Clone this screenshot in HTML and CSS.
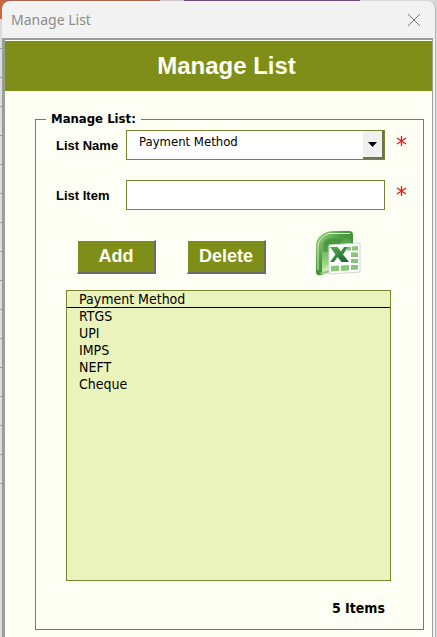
FILE: index.html
```html
<!DOCTYPE html>
<html lang="en">
<head>
    <meta charset="UTF-8">
    <meta name="viewport" content="width=device-width, initial-scale=1.0">
    <title>Manage List</title>
    <link rel="stylesheet" href="styles.css">
</head>
<body>

    <div class="window">
        <div class="titlebar">
            <span>Manage List</span>
            <button type="button" class="close" aria-label="Close">
                <svg width="14" height="14" viewBox="0 0 14 14">
                    <path d="M1 1L13 13M13 1L1 13" stroke="#777" stroke-width="1" fill="none"/>
                </svg>
            </button>
        </div>

        <form class="form">
            <h1>Manage List</h1>

            <fieldset>
                <legend>Manage List:</legend>

                <div class="field">
                    <label for="list-name">List Name</label>
                    <div class="combo">
                        <select id="list-name">
                            <option>Payment Method</option>
                        </select>
                        <span class="arrow">
                            <svg width="9" height="5" viewBox="0 0 9 5"><path d="M0 0H9L4.5 5Z" fill="#000"/></svg>
                        </span>
                    </div>
                    <svg class="required" width="11" height="12" viewBox="0 0 11 12">
                        <path d="M5.5 1V11M1 3L10 9M10 3L1 9" stroke="#e01b1b" stroke-width="1.3" fill="none"/>
                    </svg>
                </div>

                <div class="field">
                    <label for="list-item">List Item</label>
                    <input type="text" id="list-item">
                    <svg class="required" width="11" height="12" viewBox="0 0 11 12">
                        <path d="M5.5 1V11M1 3L10 9M10 3L1 9" stroke="#e01b1b" stroke-width="1.3" fill="none"/>
                    </svg>
                </div>

                <div class="actions">
                    <button type="button" class="btn">Add</button>
                    <button type="button" class="btn">Delete</button>
                    <button type="button" class="excel" aria-label="Export to Excel">
                        <svg width="46" height="47" viewBox="0 0 46 47">
                            <defs>
                                <linearGradient id="frame" x1="0" y1="0" x2="1" y2="1">
                                    <stop offset="0" stop-color="#a9dc8c"/>
                                    <stop offset="0.4" stop-color="#4c9a3c"/>
                                    <stop offset="1" stop-color="#2c7a2a"/>
                                </linearGradient>
                                <linearGradient id="inside" x1="0" y1="0" x2="0" y2="1">
                                    <stop offset="0" stop-color="#4f9d45"/>
                                    <stop offset="0.6" stop-color="#8cc878"/>
                                    <stop offset="1" stop-color="#c2e8a4"/>
                                </linearGradient>
                                <linearGradient id="cross" x1="0" y1="0" x2="1" y2="1">
                                    <stop offset="0" stop-color="#5cac50"/>
                                    <stop offset="1" stop-color="#14602c"/>
                                </linearGradient>
                            </defs>
                            <path d="M1 15Q1 6 12 2Q15 1 20 1H34Q38 1 38 5V35L6 45Q1 46 1 42Z" fill="url(#frame)"/>
                            <path d="M3 40V16Q4 7 14 3.500H35" stroke="#d3f0bd" stroke-width="1" fill="none"/>
                            <path d="M7 40V17Q7 9 16 8H36V32L8 42Z" fill="url(#inside)"/>
                            <path d="M8 22Q20 23 28 9H17Q8 10 8 18Z" fill="#3e8d38" opacity="0.6"/>
                            <path d="M5 44Q12 34 20 32V44Z" fill="#d7f3bd" opacity="0.6"/>
                            <path d="M14 15L45 13V42L14 44Z" fill="#fff" stroke="#cfdcc9" stroke-width="1"/>
                            <path d="M32 17L36 16.800V20.500H32ZM37 16.500L43 16V20.500H37ZM36 22.500H43V27H36ZM36 29H43V33H36ZM16 36L24 35.500V41L16 41.500ZM26 35.500L34 35V40.500L26 41ZM36 35H43V39.500L36 40Z" fill="#8ac57b"/>
                            <path d="M15 17H22.500L26 21.500L29 17H33L28 24.500L34 32H26.500L22.500 27L19 32H15L20.500 24.500Z" fill="url(#cross)"/>
                        </svg>
                    </button>
                </div>

                <div class="list">
                    <label for="items">Payment Method</label>
                    <select id="items" size="5">
                        <option>RTGS</option>
                        <option>UPI</option>
                        <option>IMPS</option>
                        <option>NEFT</option>
                        <option>Cheque</option>
                    </select>
                </div>

                <p class="count">5 Items</p>
            </fieldset>
        </form>
    </div>

</body>
</html>
```
FILE: styles.css
```css
* {
    box-sizing: border-box;
}

body {
    margin: 0;
    padding: 1px 1px 0 2px;
    min-height: 100vh;
    display: flex;
    font-family: "DejaVu Sans Condensed", "Noto Sans", sans-serif;
    background:
        linear-gradient(#c9683f, #c9683f) 0 0 / 4px 19px no-repeat,
        linear-gradient(to right, #a9654f 160px, #cfc6cc 160px, #cfc6cc 184px, #6f4a80 184px, #6f4a80 360px, #d8d8dc 360px) 0 0 / 100% 4px no-repeat,
        repeating-linear-gradient(#dcdce0 0, #dcdce0 28px, #9a9aa6 28px, #9a9aa6 29px) 0 20px / 4px 464px no-repeat,
        #dcdce0;
}

.window {
    flex: 1;
    display: flex;
    flex-direction: column;
    background-color: #f2f2f2;
    border-right: 1px solid #b4b4b4;
    border-radius: 8px 8px 0 0;
}

.titlebar {
    display: flex;
    justify-content: space-between;
    align-items: center;
    height: 37px;
    padding: 0 6px 0 9px;
    font-family: "Noto Sans", sans-serif;
    font-size: 14px;
    color: #8a8a8a;
}

.close {
    display: flex;
    padding: 8px;
    border: none;
    background: none;
    cursor: pointer;
}

.form {
    flex: 1;
    margin-right: 2px;
    border: 2px solid #9a9f96;
    border-width: 2px 1px 0 3px;
    background-color: #fdfff4;
    padding-top: 1px;
}

h1 {
    margin: 0;
    height: 50px;
    line-height: 50px;
    background-color: #7f8e18;
    color: #fdfff0;
    font-family: "Liberation Sans", Arial, sans-serif;
    font-size: 24px;
    text-align: center;
    padding-left: 16px;
}

fieldset {
    min-width: 0;
    margin: 20px 8px 7px 30px;
    padding: 3px 32px 12px 30px;
    border: 1px solid #7a8430;
}

legend {
    margin-left: -20px;
    padding: 0 5px;
    font-size: 13px;
    line-height: 16px;
    font-weight: bold;
}

.field {
    display: grid;
    grid-template-columns: 59px 1fr 11px;
    column-gap: 11px;
    height: 30px;
    margin: 0 -16px 20px -10px;
}

.field label {
    align-self: center;
    font-family: "Liberation Sans", Arial, sans-serif;
    font-size: 13px;
    font-weight: bold;
    white-space: nowrap;
}

.field input,
.field select {
    width: 100%;
    height: 30px;
    padding: 0 12px;
    border: 1px solid #7a8430;
    border-radius: 0;
    background-color: #fff;
    color: #000;
    font-family: inherit;
    font-size: 13px;
}

.field select {
    appearance: none;
    padding-bottom: 7px;
}

.combo {
    position: relative;
}

.arrow {
    position: absolute;
    top: 1px;
    right: 1px;
    bottom: 1px;
    width: 21px;
    display: flex;
    align-items: center;
    justify-content: center;
    background-color: #f0f0f0;
    border-right: 2px solid #6f7350;
    border-bottom: 2px solid #6f7350;
    pointer-events: none;
}

.required {
    margin-top: 5px;
}

.actions {
    display: flex;
    margin: 20px 0 13px 11px;
}

.btn {
    width: 79px;
    height: 34px;
    margin: 10px 31px 0 0;
    border: 1px solid;
    border-width: 1px 2px 2px 1px;
    border-color: #fdfff4 #6b6b6b #6b6b6b #fdfff4;
    background-color: #7f8e18;
    color: #fdfff0;
    font-family: "Liberation Sans", Arial, sans-serif;
    font-size: 18px;
    font-weight: bold;
    padding: 0;
    cursor: pointer;
}

.excel {
    display: flex;
    margin-left: auto;
    margin-right: 30px;
    padding: 0;
    border: none;
    background: none;
    cursor: pointer;
}

.list {
    height: 291px;
    border: 1px solid #7a8430;
    background-color: #ebf3bc;
    font-size: 14px;
    line-height: 17px;
}

.list label {
    display: block;
    padding-left: 12px;
    line-height: 16px;
    border-bottom: 1px solid #000;
}

.list select {
    display: block;
    width: 100%;
    height: 270px;
    padding: 0;
    border: none;
    background: none;
    font: inherit;
    color: #000;
    outline: none;
}

.list option {
    min-height: 17px;
    padding: 0 12px;
}

.count {
    margin: 19px 6px 0 0;
    font-size: 14px;
    line-height: 17px;
    font-weight: bold;
    text-align: right;
}
```
